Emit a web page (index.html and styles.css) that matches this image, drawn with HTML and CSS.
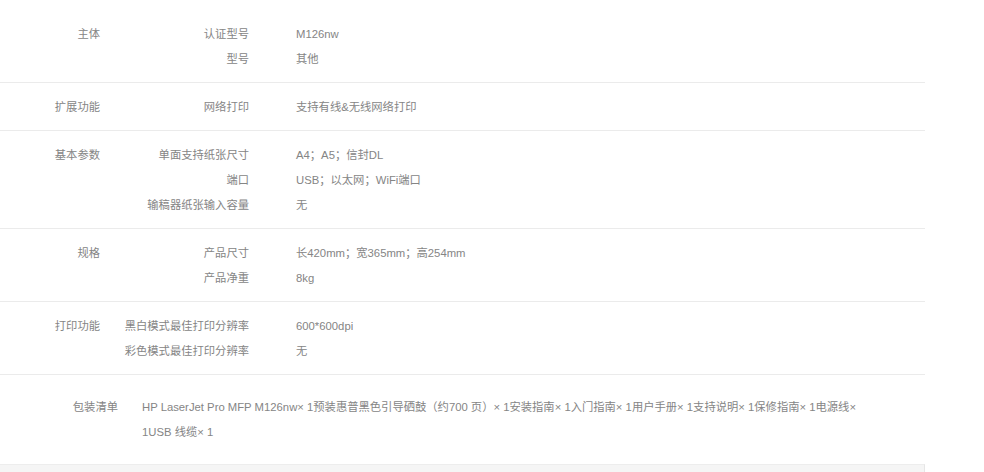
FILE: index.html
```html
<!DOCTYPE html>
<html lang="zh-CN">
<head>
<meta charset="utf-8">
<title>规格参数</title>
<link rel="stylesheet" href="styles.css">
</head>
<body>
<div class="spec">
  <div class="group first">
    <div class="group-name">主体</div>
    <div class="rows">
      <div class="row"><span class="key">认证型号</span><span class="val">M126nw</span></div>
      <div class="row"><span class="key">型号</span><span class="val">其他</span></div>
    </div>
  </div>
  <div class="group">
    <div class="group-name">扩展功能</div>
    <div class="rows">
      <div class="row"><span class="key">网络打印</span><span class="val">支持有线&amp;无线网络打印</span></div>
    </div>
  </div>
  <div class="group">
    <div class="group-name">基本参数</div>
    <div class="rows">
      <div class="row"><span class="key">单面支持纸张尺寸</span><span class="val">A4；A5；信封DL</span></div>
      <div class="row"><span class="key">端口</span><span class="val">USB；以太网；WiFi端口</span></div>
      <div class="row"><span class="key">输稿器纸张输入容量</span><span class="val">无</span></div>
    </div>
  </div>
  <div class="group">
    <div class="group-name">规格</div>
    <div class="rows">
      <div class="row"><span class="key">产品尺寸</span><span class="val">长420mm；宽365mm；高254mm</span></div>
      <div class="row"><span class="key">产品净重</span><span class="val">8kg</span></div>
    </div>
  </div>
  <div class="group">
    <div class="group-name">打印功能</div>
    <div class="rows">
      <div class="row"><span class="key">黑白模式最佳打印分辨率</span><span class="val">600*600dpi</span></div>
      <div class="row"><span class="key">彩色模式最佳打印分辨率</span><span class="val">无</span></div>
    </div>
  </div>
  <div class="group pack">
    <div class="pack-name">包装清单</div>
    <div class="pack-val">HP LaserJet Pro MFP M126nw× 1预装惠普黑色引导硒鼓（约700 页）× 1安装指南× 1入门指南× 1用户手册× 1支持说明× 1保修指南× 1电源线×<br>1USB 线缆× 1</div>
  </div>
  <div class="foot"></div>
</div>
</body>
</html>
```

FILE: styles.css
```css
html, body {
  margin: 0;
  padding: 0;
  background: #fff;
}
body {
  font-family: "Liberation Sans", "Noto Sans CJK SC", sans-serif;
  font-size: 11.3px;
  color: #858585;
}
.spec {
  width: 925px;
  padding-top: 10px;
}
.group {
  display: flex;
  padding: 12px 0 10px;
  border-bottom: 1px solid #ebebeb;
  line-height: 25px;
}
.group-name {
  width: 100px;
  flex: none;
  text-align: right;
}
.rows {
  display: flex;
  flex-direction: column;
}
.row {
  display: flex;
}
.key {
  width: 149px;
  flex: none;
  text-align: right;
}
.val {
  margin-left: 47px;
}
.group.pack {
  padding: 20px 0 19px;
  border-bottom: none;
}
.pack-name {
  width: 118px;
  flex: none;
  text-align: right;
}
.pack-val {
  margin-left: 24px;
}
.foot {
  height: 20px;
  background: #f5f5f5;
  border-top: 1px solid #ededed;
  border-right: 1px solid #e6e6e6;
}
```
